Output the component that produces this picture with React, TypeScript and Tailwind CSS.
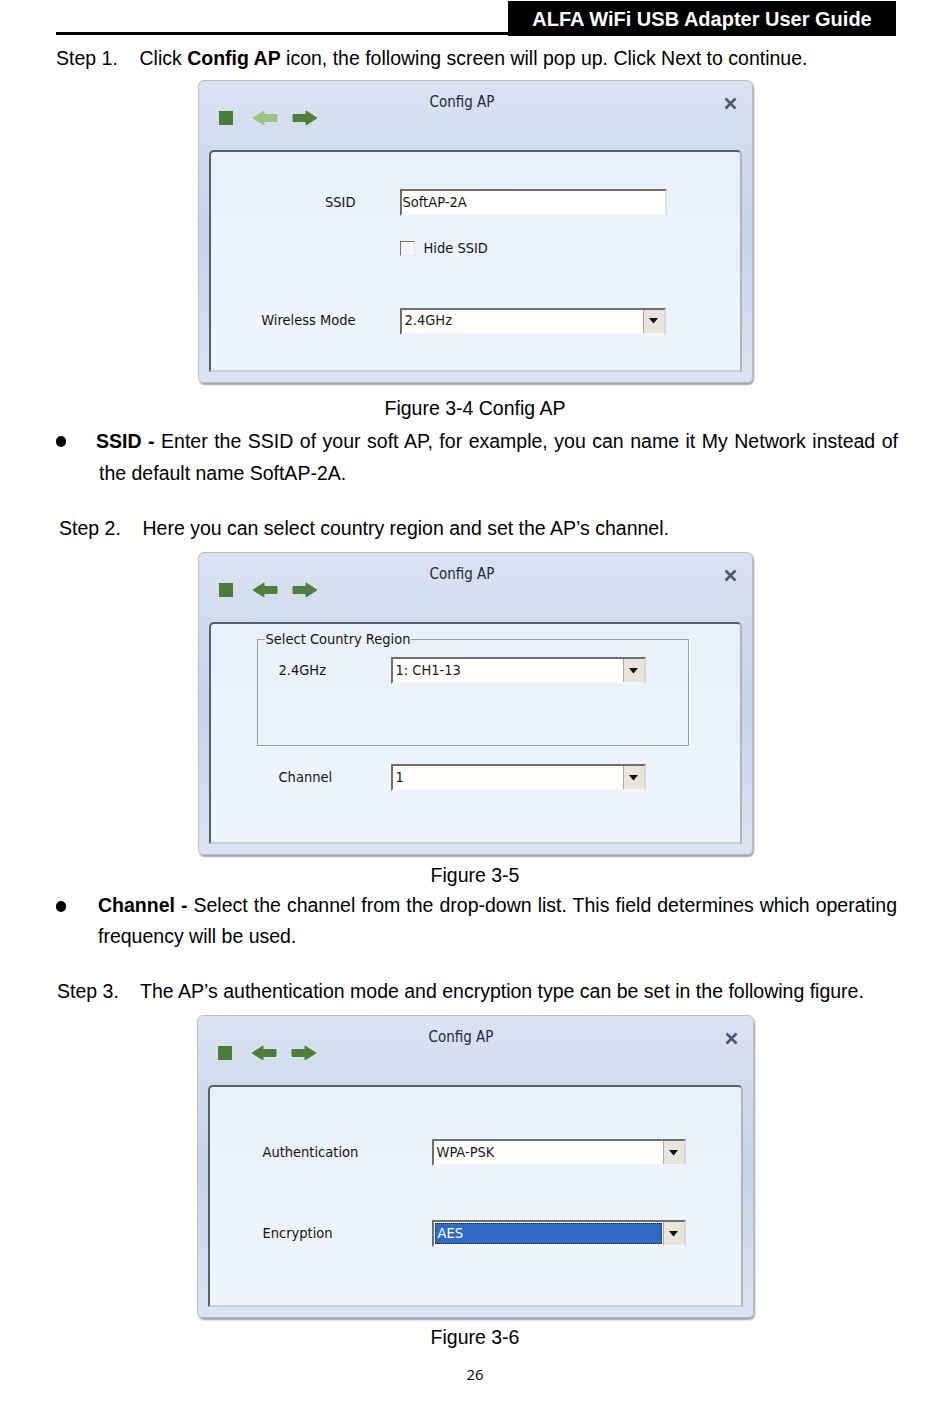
import React from 'react';

const bodyFont = "font-['Liberation_Sans',Arial,sans-serif]";
const uiFont = "font-['DejaVu_Sans_Condensed','DejaVu_Sans',Tahoma,sans-serif]";

const Arrow: React.FC<{ dir: 'left' | 'right'; color: string }> = ({ dir, color }) => (
  <svg width="26" height="16" viewBox="0 0 26 16">
    <path
      d="M1 8 L12 1 L12 4.5 L25 4.5 L25 11.5 L12 11.5 L12 15 Z"
      fill={color}
      stroke={color}
      strokeWidth="1"
      strokeLinejoin="round"
      transform={dir === 'right' ? 'translate(26 0) scale(-1 1)' : undefined}
    />
  </svg>
);

const Dropdown: React.FC<{ value: string; width: number; selected?: boolean }> = ({ value, width, selected }) => (
  <div
    className="flex h-[27px] border-2 border-t-[#6f6f6f] border-l-[#6f6f6f] border-b-[#f4f4f4] border-r-[#d8d8d8] bg-[#fffffb]"
    style={{ width }}
  >
    <div className="flex flex-1 items-center pl-[1px] pr-[1px]">
      {selected ? (
        <div className="flex h-[21px] w-full items-center border border-dotted border-[#10204a] bg-[#3169c6] pl-[2px] text-white">
          {value}
        </div>
      ) : (
        <span className="pl-[2px] text-[#1a1a1a]">{value}</span>
      )}
    </div>
    <div className="flex w-[21px] items-center justify-center border-l border-[#a8a8a0] bg-[#e8e6dc]">
      <svg width="9" height="6" viewBox="0 0 9 6">
        <path d="M0 0 L9 0 L4.5 5.5 Z" fill="#111" />
      </svg>
    </div>
  </div>
);

const ConfigDialog: React.FC<{ backDisabled?: boolean; width?: number; children: React.ReactNode }> = ({
  backDisabled,
  width = 555,
  children,
}) => (
  <div
    className={`mx-auto flex h-[303px] flex-col rounded-[6px] border border-[#b9bec6] bg-gradient-to-b from-[#dae3f0] via-[#c5d4e8] to-[#dbe5f1] px-[10px] pb-[10px] shadow-[1px_2px_2px_#9aa0a8] ${uiFont}`}
    style={{ width }}
  >
    <div className="relative flex h-[69px] shrink-0 items-start">
      <div className="mt-[29px] ml-[10px] flex items-center">
        <div className="h-[14px] w-[14px] bg-[#4b7b3b]" />
        <div className="ml-[19px]">
          <Arrow dir="left" color={backDisabled ? '#9cc585' : '#4f7f3c'} />
        </div>
        <div className="ml-[14px]">
          <Arrow dir="right" color="#4f7f3c" />
        </div>
      </div>
      <div className="absolute left-[221px] top-[10px] text-[15px] text-[#1f2a3a]">Config AP</div>
      <svg className="absolute right-[5px] top-[16px]" width="13" height="13" viewBox="0 0 13 13">
        <path d="M1.5 1.5 L11.5 11.5 M11.5 1.5 L1.5 11.5" stroke="#4a5870" strokeWidth="2.6" />
      </svg>
    </div>
    <div className="flex-1 rounded-t-[5px] border-2 border-t-[#56606c] border-l-[#56606c] border-r-[#aeb6c2] border-b-[#c8ced8] bg-gradient-to-b from-[#e8f0f9] to-[#eef5fb] text-[14.5px] text-[#141414]">
      {children}
    </div>
  </div>
);

const Dot: React.FC = () => <div className="mt-[11px] h-[11px] w-[10px] rounded-full bg-black" />;

const App: React.FC = () => {
  return (
    <div className={`w-[950px] bg-white pb-[20px] text-black ${bodyFont}`}>
      {/* Header */}
      <div className="flex items-end pt-[1px] pl-[56px] pr-[54px]">
        <div className="mb-[1px] flex-1 border-b-[3px] border-black" />
        <div className="flex h-[35px] w-[388px] items-center justify-center bg-black pt-[1px] text-[20px] font-bold text-white">
          ALFA WiFi USB Adapter User Guide
        </div>
      </div>

      <div className="px-[56px]">
        <p className="mt-[10px] text-[19.5px] leading-[24px]">
          Step 1.&nbsp;&nbsp;&nbsp; Click <b>Config AP</b> icon, the following screen will pop up. Click Next to continue.
        </p>
      </div>

      {/* Figure 3-4 */}
      <div className="mt-[10px]">
        <ConfigDialog backDisabled>
          <div className="flex flex-col pt-[37px]">
            <div className="flex items-center">
              <div className="w-[145px] text-right">SSID</div>
              <div className="ml-[44px] flex h-[27px] w-[267px] items-center border-2 border-t-[#6f6f6f] border-l-[#6f6f6f] border-b-[#f4f4f4] border-r-[#e0e0e0] bg-[#fffffd] pl-[1px]">
                SoftAP-2A
              </div>
            </div>
            <div className="mt-[22px] ml-[189px] flex items-center gap-[9px]">
              <div className="h-[15px] w-[15px] border border-t-[#707070] border-l-[#707070] border-b-[#e8e8e8] border-r-[#e8e8e8] bg-[#f4f6f8]" />
              <span>Hide SSID</span>
            </div>
            <div className="mt-[48px] flex items-center">
              <div className="w-[145px] text-right">Wireless Mode</div>
              <div className="ml-[44px]">
                <Dropdown value="2.4GHz" width={266} />
              </div>
            </div>
          </div>
        </ConfigDialog>
      </div>

      <p className="mt-[13px] text-center text-[19.5px] leading-[24px]">Figure 3-4 Config AP</p>

      <div className="mt-[5px] flex pl-[56px] pr-[52px] text-[19.5px] leading-[32px]">
        <div className="w-[40px] shrink-0">
          <Dot />
        </div>
        <div className="flex-1">
          <p className="whitespace-nowrap text-justify [text-align-last:justify]">
            <b>SSID -</b> Enter the SSID of your soft AP, for example, you can name it My Network instead of
          </p>
          <p className="pl-[3px]">the default name SoftAP-2A.</p>
        </div>
      </div>

      <div className="px-[56px]">
        <p className="mt-[27px] pl-[3px] text-[19.5px] leading-[24px]">
          Step 2.&nbsp;&nbsp;&nbsp; Here you can select country region and set the AP’s channel.
        </p>
      </div>

      {/* Figure 3-5 */}
      <div className="mt-[12px]">
        <ConfigDialog>
          <div className="flex flex-col pt-[15px]">
            <div className="relative ml-[46px] h-[107px] w-[432px] border border-[#9a9ea4] shadow-[1px_1px_0_#fff]">
              <div className="absolute -top-[10px] left-[7px] bg-[#e9f1f9] px-[1px] leading-[18px]">
                Select Country Region
              </div>
              <div className="mt-[17px] flex items-center">
                <div className="ml-[21px] w-[112px]">2.4GHz</div>
                <Dropdown value="1: CH1-13" width={255} />
              </div>
            </div>
            <div className="mt-[18px] flex items-center">
              <div className="ml-[68px] w-[112px]">Channel</div>
              <Dropdown value="1" width={255} />
            </div>
          </div>
        </ConfigDialog>
      </div>

      <p className="mt-[8px] text-center text-[19.5px] leading-[24px]">Figure 3-5</p>

      <div className="mt-[3px] flex pl-[56px] pr-[53px] text-[19.5px] leading-[31px]">
        <div className="w-[42px] shrink-0">
          <Dot />
        </div>
        <div className="flex-1">
          <p className="whitespace-nowrap text-justify [text-align-last:justify]">
            <b>Channel -</b> Select the channel from the drop-down list. This field determines which operating
          </p>
          <p>frequency will be used.</p>
        </div>
      </div>

      <div className="px-[56px]">
        <p className="mt-[27px] pl-[1px] text-[19.5px] leading-[24px]">
          Step 3.&nbsp;&nbsp;&nbsp; The AP’s authentication mode and encryption type can be set in the following figure.
        </p>
      </div>

      {/* Figure 3-6 */}
      <div className="mt-[12px]">
        <ConfigDialog width={557}>
          <div className="flex flex-col pt-[52px]">
            <div className="flex items-center">
              <div className="ml-[53px] w-[169px]">Authentication</div>
              <Dropdown value="WPA-PSK" width={254} />
            </div>
            <div className="mt-[54px] flex items-center">
              <div className="ml-[53px] w-[169px]">Encryption</div>
              <Dropdown value="AES" width={254} selected />
            </div>
          </div>
        </ConfigDialog>
      </div>

      <p className="mt-[7px] text-center text-[19.5px] leading-[24px]">Figure 3-6</p>
      <p className="mt-[15px] text-center font-['Open_Sans',sans-serif] text-[15px] leading-[20px]">26</p>
    </div>
  );
};

export default App;
